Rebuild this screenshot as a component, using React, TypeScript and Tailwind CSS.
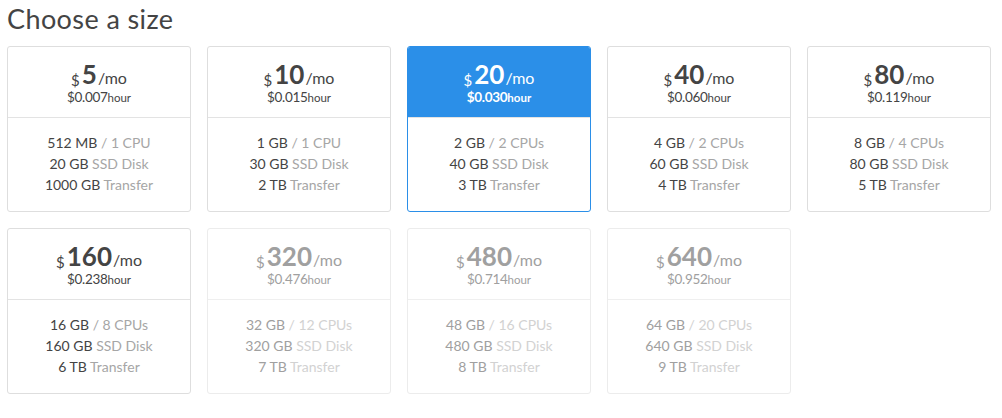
import React from "react";

type Plan = {
  price: string;
  hour: string;
  mem: string;
  cpu: string;
  disk: string;
  transfer: string;
  selected?: boolean;
  disabled?: boolean;
};

const plans: Plan[] = [
  { price: "5", hour: "$0.007", mem: "512 MB", cpu: "1 CPU", disk: "20 GB", transfer: "1000 GB" },
  { price: "10", hour: "$0.015", mem: "1 GB", cpu: "1 CPU", disk: "30 GB", transfer: "2 TB" },
  { price: "20", hour: "$0.030", mem: "2 GB", cpu: "2 CPUs", disk: "40 GB", transfer: "3 TB", selected: true },
  { price: "40", hour: "$0.060", mem: "4 GB", cpu: "2 CPUs", disk: "60 GB", transfer: "4 TB" },
  { price: "80", hour: "$0.119", mem: "8 GB", cpu: "4 CPUs", disk: "80 GB", transfer: "5 TB" },
  { price: "160", hour: "$0.238", mem: "16 GB", cpu: "8 CPUs", disk: "160 GB", transfer: "6 TB" },
  { price: "320", hour: "$0.476", mem: "32 GB", cpu: "12 CPUs", disk: "320 GB", transfer: "7 TB", disabled: true },
  { price: "480", hour: "$0.714", mem: "48 GB", cpu: "16 CPUs", disk: "480 GB", transfer: "8 TB", disabled: true },
  { price: "640", hour: "$0.952", mem: "64 GB", cpu: "20 CPUs", disk: "640 GB", transfer: "9 TB", disabled: true },
];

function Card({ p }: { p: Plan }) {
  const border = p.selected ? "border-[#2b8fe8]" : p.disabled ? "border-[#ececec]" : "border-[#dedede]";
  const head = p.selected
    ? "bg-[#2b8fe8] text-white"
    : p.disabled
    ? "text-[#a0a0a0]"
    : "text-[#444]";
  const dark = p.disabled ? "text-[#a0a0a0]" : "text-[#444]";
  const light = p.disabled ? "text-[#d2d2d2]" : "text-[#a6a6a6]";
  const divider = p.disabled ? "border-[#efefef]" : "border-[#e3e3e3]";
  return (
    <div className={`w-[184px] h-[166px] rounded-[3px] border ${border} flex flex-col overflow-hidden bg-white`}>
      <div className={`h-[71px] flex flex-col items-center pt-[14px] border-b ${divider} ${head}`}>
        <div className="flex items-baseline leading-none">
          <span className="text-[15px] mr-[2px] translate-y-[2px]">$</span>
          <span className="text-[26px] font-bold">{p.price}</span>
          <span className="text-[16px] ml-[1px]">/mo</span>
        </div>
        <div className="flex items-baseline leading-none mt-[4px]">
          <span className={`text-[13.5px] ${p.selected ? "font-bold" : ""} tracking-[-0.3px]`}>{p.hour}</span>
          <span className={`text-[11.5px] ${p.selected ? "font-bold" : ""}`}>hour</span>
        </div>
      </div>
      <div className="flex-1 flex flex-col items-center pt-[14px] text-[14px] leading-[21px]">
        <div>
          <span className={dark}>{p.mem}</span> <span className={light}>/ {p.cpu}</span>
        </div>
        <div>
          <span className={dark}>{p.disk}</span> <span className={light}>SSD Disk</span>
        </div>
        <div>
          <span className={dark}>{p.transfer}</span> <span className={light}>Transfer</span>
        </div>
      </div>
    </div>
  );
}

export default function App() {
  return (
    <div className="w-[1002px] h-[418px] bg-white px-[7px] pt-[2px]" style={{ fontFamily: "Lato, 'Open Sans', sans-serif" }}>
      <h1 className="text-[27px] leading-[34px] tracking-[0.4px] text-[#444] mb-[10px]">Choose a size</h1>
      <div className="grid grid-cols-[repeat(5,184px)] gap-x-[16px] gap-y-[16px]">
        {plans.map((p) => (
          <Card key={p.price} p={p} />
        ))}
      </div>
    </div>
  );
}
